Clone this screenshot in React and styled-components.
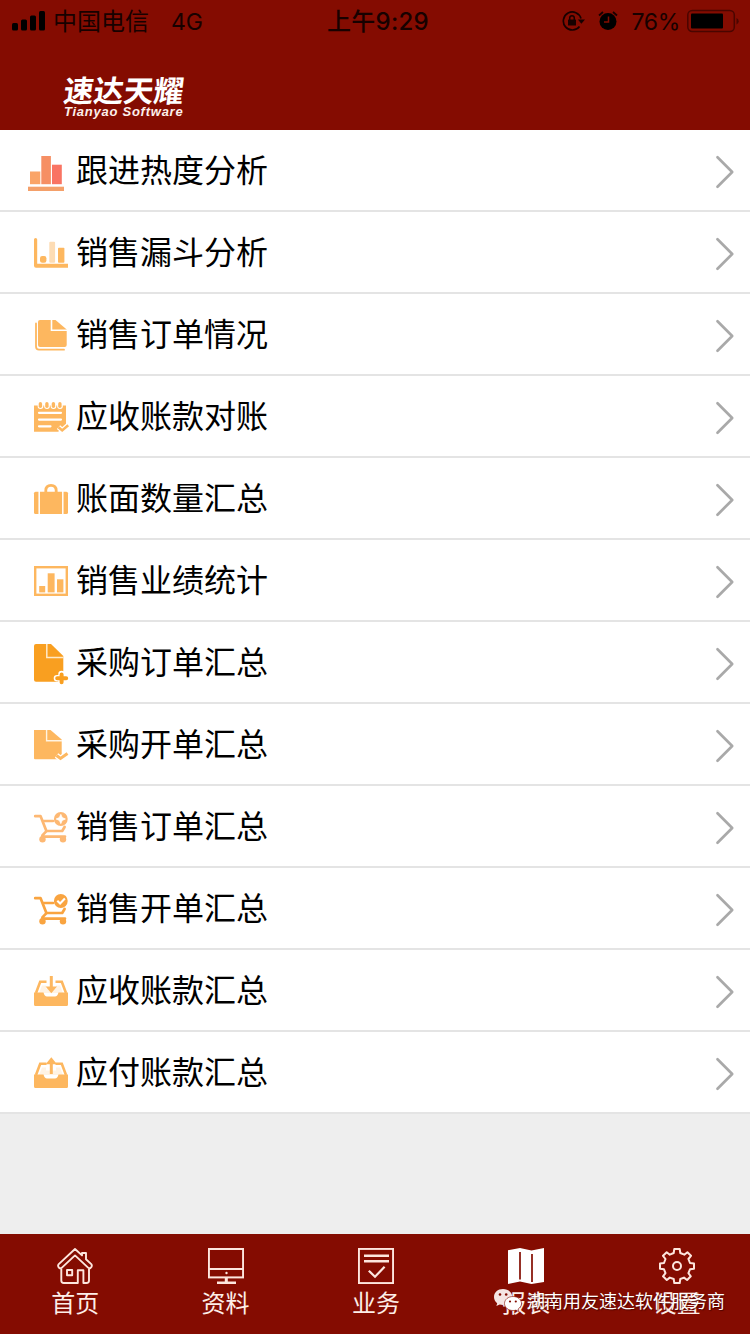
import React from "react";
import styled, { createGlobalStyle } from "styled-components";

const RED = "#840c01";
const ORANGE = "#fdb75f";
const DEEP = "#f99f20";
const INK = "#170100";

const GlobalStyle = createGlobalStyle`
  *, *::before, *::after { box-sizing: border-box; }
  body {
    margin: 0;
    background: #eeeeee;
    font-family: "Noto Sans CJK SC", sans-serif;
  }
`;

const Screen = styled.div`
  display: flex;
  flex-direction: column;
  width: 750px;
  height: 1334px;
  overflow: hidden;
  background: #eeeeee;
`;

const Header = styled.header`
  display: flex;
  flex-direction: column;
  height: 130px;
  background: ${RED};
`;

const StatusBar = styled.div`
  display: grid;
  grid-template-columns: 1fr auto 1fr;
  align-items: center;
  height: 40px;
  padding: 0 11px 0 12px;
  color: ${INK};
  font-family: Inter, "Noto Sans CJK SC", sans-serif;
  font-size: 24px;
  line-height: 40px;
`;

const StatusGroup = styled.div`
  display: flex;
  align-items: center;
  justify-content: ${(p) => (p.$end ? "flex-end" : "flex-start")};
`;

const StatusText = styled.span`
  padding-top: 2px;
  font-size: ${(p) => p.$size || 24}px;
  font-weight: ${(p) => p.$weight || 400};
  letter-spacing: ${(p) => p.$spacing || 0}px;
  margin-left: ${(p) => p.$gap || 0}px;
  line-height: 40px;
  white-space: nowrap;
`;

const StatusIcon = styled.svg`
  display: block;
  flex: none;
  margin-left: ${(p) => p.$gap || 0}px;
`;

const Brand = styled.div`
  display: flex;
  flex-direction: column;
  align-items: flex-start;
  padding: 33px 0 0 64px;
  color: #fff;
`;

const BrandName = styled.div`
  font-size: 30px;
  line-height: 32px;
  font-weight: 700;
  transform: skewX(-7deg);
`;

const BrandSub = styled.div`
  font-family: "Liberation Sans", sans-serif;
  font-size: 13px;
  line-height: 14px;
  font-weight: 700;
  font-style: italic;
  letter-spacing: 0.75px;
  white-space: nowrap;
  color: #fdf0ec;
`;

const List = styled.ul`
  flex: 1;
  margin: 0;
  padding: 0;
  list-style: none;
`;

const Row = styled.li`
  display: flex;
  align-items: center;
  height: 82px;
  padding: 0 14px 0 24px;
  background: #fff;
  border-bottom: 2px solid #e4e4e4;
`;

const RowIcon = styled.svg`
  display: block;
  flex: none;
  width: 48px;
  height: 48px;
`;

const RowLabel = styled.span`
  flex: 1;
  padding: 0 0 4px 4px;
  font-size: 32px;
  line-height: 48px;
  color: #000;
`;

const Chevron = styled.svg`
  display: block;
  flex: none;
  margin-top: 4px;
`;

const TabBar = styled.nav`
  position: relative;
  display: flex;
  height: 100px;
  background: ${RED};
`;

const Tab = styled.div`
  display: flex;
  flex: none;
  flex-direction: column;
  align-items: center;
  width: 150.4px;
  padding-top: 14px;
`;

const TabIcon = styled.svg`
  display: block;
  width: 36px;
  height: 36px;
`;

const TabLabel = styled.span`
  margin-top: 1px;
  font-size: 24px;
  line-height: 34px;
  color: #fdeee8;
`;

const Watermark = styled.div`
  position: absolute;
  left: 493px;
  top: 53px;
  display: flex;
  align-items: center;
  gap: 4px;
  color: #fff;
  font-size: 18px;
  line-height: 26px;
  white-space: nowrap;
  text-shadow: 1px 1px 1px rgba(60, 0, 0, 0.75);
`;

const HeatIcon = () => (
  <>
    <rect x="6" y="25.5" width="10.3" height="12.7" fill="#faa467" />
    <rect x="17.3" y="10" width="9.6" height="28.2" fill="#f68f64" />
    <rect x="28" y="18.7" width="9.8" height="19.5" fill="#f97463" />
    <rect x="4" y="40.7" width="36" height="4.3" fill="#f4a06a" />
  </>
);

const FunnelIcon = () => (
  <g fill={ORANGE}>
    <path d="M10 11.5q0-1.5 1.6-1.5t1.6 1.5v24.3H44v4H12q-2 0-2-2z" />
    <rect x="16" y="28" width="6.4" height="6.8" rx="2.2" />
    <rect x="25.3" y="13.7" width="5.8" height="21" rx="1" fill="#fddcb4" />
    <rect x="34" y="19.7" width="6.4" height="15" rx="0.8" />
  </g>
);

const FilesIcon = () => (
  <>
    <path d="M12 13.5V36.5Q12 39.7 15 39.7H40" fill="none" stroke={ORANGE} strokeWidth="1.8" strokeLinecap="round" />
    <path d="M16 10H31.5L42.7 19.5V35q0 2-2 2H16q-2 0-2-2V12q0-2 2-2z" fill={ORANGE} />
    <path d="M27.5 9.5V20.3H43" fill="none" stroke="#fff" strokeWidth="1.6" />
    <path d="M33 9h10v9.2z" fill="#fff" />
  </>
);

const NotesIcon = () => (
  <>
    <path d="M10 13.5H42V35l-8 4.8H10z" fill={ORANGE} />
    {[16.5, 23, 29.5, 36].map((x) => (
      <g key={x}>
        <circle cx={x} cy="14" r="2.9" fill="#fff" />
        <rect x={x - 1.8} y="10" width="3.4" height="6" rx="1.7" fill={ORANGE} />
      </g>
    ))}
    <path d="M15 20.8H37M15 27.6H37M15 34.3H26.5" stroke="#fff" strokeWidth="2.2" strokeLinecap="round" />
    <path d="M34.5 35.2l3.7 3.2 6-5.2" fill="none" stroke="#fff" strokeWidth="5" />
    <path d="M34.5 35.2l3.7 3.2 6-5.2" fill="none" stroke={ORANGE} strokeWidth="2.6" />
  </>
);

const CaseIcon = () => (
  <>
    <rect x="10" y="17.7" width="34" height="22.3" rx="1.6" fill={ORANGE} />
    <path d="M15.2 17V41M38.8 17V41" stroke="#fff" strokeWidth="1.5" />
    <path d="M21.8 18V16.5Q21.8 11.3 27 11.3T32.2 16.5V18" fill="none" stroke={ORANGE} strokeWidth="2.8" />
  </>
);

const StatsIcon = () => (
  <>
    <rect x="11.2" y="11.2" width="31.6" height="27.6" fill="none" stroke={ORANGE} strokeWidth="2.4" />
    <g fill={ORANGE}>
      <rect x="15.2" y="30" width="6" height="6.4" />
      <rect x="23.7" y="17.3" width="6.9" height="19.1" />
      <rect x="33" y="23.3" width="6.4" height="13.1" />
    </g>
  </>
);

const PurchaseOrderIcon = () => (
  <>
    <path d="M12 6H27L39.3 18V43.7H12q-2 0-2-2V8q0-2 2-2z" fill={DEEP} />
    <path d="M22.8 6V19.6H39.5" fill="none" stroke="#ffe9c8" strokeWidth="1.5" />
    <path d="M37.6 36V45M33 40.2H44" stroke="#fff" strokeWidth="6.6" strokeLinecap="round" />
    <path d="M37.6 36.4V44.2M33.2 40.2H42.2" stroke={DEEP} strokeWidth="4" strokeLinecap="round" />
  </>
);

const PurchaseBillIcon = () => (
  <>
    <path d="M10 10H26.5L37.7 19.5V39.3H11q-1 0-1-1z" fill={ORANGE} />
    <path d="M22.6 10V20.8H38" fill="none" stroke="#fff4e2" strokeWidth="1.4" />
    <path d="M32.5 35.5l4 3 7-5" fill="none" stroke="#fff" strokeWidth="5.6" />
    <path d="M32.5 35.5l4 3 7-5" fill="none" stroke={ORANGE} strokeWidth="3" />
  </>
);

const Cart = ({ color, done }) => (
  <>
    <g fill="none" stroke={color} strokeWidth="2.7" strokeLinecap="round" strokeLinejoin="round">
      <path d="M11.2 14.2H16.6L22.4 29H38.2L40.6 25" />
      <path d="M19.5 19H29M22.2 29.4L18.4 33.4Q18 34.6 19.5 34.6H41" />
    </g>
    <circle cx="18.5" cy="37.2" r="3.2" fill={color} />
    <circle cx="39" cy="37.2" r="3.2" fill={color} />
    <circle cx="36.8" cy="17" r="6.9" fill={color} />
    {done ? (
      <path d="M33.3 16.8l2.8 2.8 4.8-5" fill="none" stroke="#fff" strokeWidth="2.1" />
    ) : (
      <path d="M36.8 12.4l1.4 3.2 3.2 1.4-3.2 1.4-1.4 3.2-1.4-3.2-3.2-1.4 3.2-1.4z" fill="#fff" stroke="#fff" strokeWidth="0.8" />
    )}
  </>
);

const SalesOrderIcon = () => <Cart color="#fdb873" />;
const SalesBillIcon = () => <Cart color="#f9a440" done />;

const Tray = ({ up }) => (
  <>
    <path d="M22.500 15.800H16.200L12 27M31.500 15.800H37.800L42 27" fill="none" stroke={ORANGE} strokeWidth="2.600" />
    <path d="M18 19.500H22V22.500H32V19.500H36L39 27H15z" fill="#fff3e4" />
    <path d="M10 26.500H19.500Q20.500 30.500 23 30.500H31Q33.500 30.500 34.500 26.500H44V38.500Q44 40 42.500 40H11.500Q10 40 10 38.500z" fill={ORANGE} />
    <path d={up ? "M27.300 26V15" : "M27.300 10V21.500"} fill="none" stroke={ORANGE} strokeWidth="3" />
    <path d={up ? "M27.300 9.300L33 16.300H21.600z" : "M27.300 27.300L33 20.500H21.600z"} fill={ORANGE} />
  </>
);

const ReceivableIcon = () => <Tray />;
const PayableIcon = () => <Tray up />;

const rows = [
  ["跟进热度分析", HeatIcon],
  ["销售漏斗分析", FunnelIcon],
  ["销售订单情况", FilesIcon],
  ["应收账款对账", NotesIcon],
  ["账面数量汇总", CaseIcon],
  ["销售业绩统计", StatsIcon],
  ["采购订单汇总", PurchaseOrderIcon],
  ["采购开单汇总", PurchaseBillIcon],
  ["销售订单汇总", SalesOrderIcon],
  ["销售开单汇总", SalesBillIcon],
  ["应收账款汇总", ReceivableIcon],
  ["应付账款汇总", PayableIcon],
];

const HomeIcon = () => (
  <g fill="none" stroke="#fde6de" strokeWidth="1.9" strokeLinejoin="round">
    <path d="M18 1L25 7.4V5H29V11.2L34.5 16.4Q35.5 18.5 33.5 20Q32 20.6 30.8 19.4L18 7.4L5.2 19.4Q4 20.6 2.3 20Q0.4 18.4 1.5 16.4z" />
    <path d="M4.3 20.5V32.5Q4.3 35 6.8 35H20.8V22.2H26.4V35H29.5Q32 35 32 32.5V20.5" />
    <rect x="10" y="22" width="5.2" height="5.2" />
  </g>
);

const MonitorIcon = () => (
  <>
    <rect x="0.9" y="1" width="34.2" height="28.4" fill="none" stroke="#fde6de" strokeWidth="2" />
    <path d="M1 21H35" stroke="#fde6de" strokeWidth="2" />
    <circle cx="18.5" cy="25" r="1.2" fill="#fde6de" />
    <path d="M16.800 29.500h3v4H28V36H9V33.500h7.800z" fill="#fde6de" />
  </>
);

const TaskIcon = () => (
  <g fill="none" stroke="#fde6de">
    <rect x="0.9" y="0.9" width="34.2" height="34.2" strokeWidth="2" />
    <path d="M6 7.8H31M6 13.3H31" strokeWidth="2.4" />
    <path d="M10.8 22.7L17 28.7L26.6 18.8" strokeWidth="2.2" />
  </g>
);

const MapIcon = () => (
  <>
    <path d="M0 2.2L12 0L23.5 2.5L36 0V34L23.5 36L12 33.5L0 36z" fill="#fff" />
    <path d="M12 4V31.5M24 6V34" stroke={RED} strokeWidth="1.7" />
  </>
);

const GearIcon = () => (
  <g fill="none" stroke="#fde6de" strokeWidth="2" strokeLinejoin="round">
    <path d="M15.3 1H20.7L21.3 5L25.3 6.7L28.4 4.2L32 7.8L29.4 11L31 15L35 15.5V20.7L31 21.3L29.4 25.1L31.8 28.3L28.1 32L25 29.6L21.3 31L20.7 35H15.3L14.7 31L10.8 29.6L7.8 32L4 28.3L6.5 25.1L5 21.3L1 20.7V15.5L5 15L6.5 11L4 7.8L7.7 4.2L10.8 6.7L14.7 5z" />
    <circle cx="18" cy="18" r="4" />
  </g>
);

const tabs = [
  ["首页", HomeIcon],
  ["资料", MonitorIcon],
  ["业务", TaskIcon],
  ["报表", MapIcon],
  ["设置", GearIcon],
];

const WeChatMark = () => (
  <svg width="30" height="26" viewBox="0 0 30 26">
    <path d="M10 2C4.7 2 1 5.500 1 10c0 2.500 1.200 4.700 3.200 6.200L3.400 19l3.300-1.600c1 .3 2.100.5 3.300.5 5.300 0 9.300-3.500 9.300-8S15.300 2 10 2z" fill="#f5e5e3" />
    <circle cx="7" cy="7.500" r="1.300" fill={RED} />
    <circle cx="13.200" cy="7.500" r="1.300" fill={RED} />
    <path d="M20 9.500c-4.800 0-8.500 3.100-8.500 7s3.700 7 8.500 7c1 0 2-.1 2.900-.4l2.900 1.500-.8-2.500c2-1.300 3.500-3.200 3.500-5.600 0-3.900-3.700-7-8.500-7z" fill="#fff" stroke={RED} strokeWidth="0.600" />
    <circle cx="17" cy="14.500" r="1.100" fill={RED} />
    <circle cx="22.800" cy="14.500" r="1.100" fill={RED} />
  </svg>
);

export default function App() {
  return (
    <>
      <GlobalStyle />
      <Screen>
        <Header>
          <StatusBar>
            <StatusGroup>
              <StatusIcon width="34" height="22" viewBox="0 0 34 22" fill="#000">
                <rect x="0" y="13" width="6" height="7.500" rx="1.500" />
                <rect x="9" y="9.500" width="6" height="11" rx="1.500" />
                <rect x="18" y="5.500" width="6" height="15" rx="1.500" />
                <rect x="27" y="1" width="6" height="19.500" rx="1.500" />
              </StatusIcon>
              <StatusText $gap={7}>中国电信</StatusText>
              <StatusText $gap={22} $size={23}>4G</StatusText>
            </StatusGroup>
            <StatusText $gap={5} $weight={500} $spacing={0.3}>上午9:29</StatusText>
            <StatusGroup $end>
              <StatusIcon width="23" height="22" viewBox="0 0 23 22">
                <path d="M17.500 16.500A9 9 0 1 1 19 8.500" fill="none" stroke={INK} strokeWidth="1.700" />
                <path d="M15.800 9.500H23L19.400 13.800z" fill={INK} />
                <rect x="6" y="9.500" width="8" height="6" rx="0.600" fill={INK} />
                <path d="M7.700 10V8a2.300 2.300 0 0 1 4.600 0V10" fill="none" stroke={INK} strokeWidth="1.500" />
              </StatusIcon>
              <StatusIcon $gap={13} width="20" height="22" viewBox="0 0 20 22">
                <circle cx="10" cy="11.500" r="8.500" fill="#000" />
                <path d="M1 5.500L5 2M19 5.500L15 2" stroke={INK} strokeWidth="1.800" />
                <path d="M10.500 6.500V12H6" fill="none" stroke={RED} strokeWidth="1.500" />
              </StatusIcon>
              <StatusText $gap={13} $size={23} $spacing={-0.3}>76%</StatusText>
              <StatusIcon $gap={7} width="52" height="24" viewBox="0 0 52 24">
                <rect x="0.800" y="1.500" width="46.500" height="21" rx="4.500" fill="none" stroke="#4a0500" strokeWidth="1.500" />
                <rect x="4" y="4.500" width="32" height="15" rx="1" fill="#000" />
                <path d="M49.500 9v6.500q2.200-.8 2.200-3.200T49.500 9z" fill="#4a0500" />
              </StatusIcon>
            </StatusGroup>
          </StatusBar>
          <Brand>
            <BrandName>速达天耀</BrandName>
            <BrandSub>Tianyao Software</BrandSub>
          </Brand>
        </Header>
        <List>
          {rows.map(([label, Icon]) => (
            <Row key={label}>
              <RowIcon viewBox="0 0 48 48"><Icon /></RowIcon>
              <RowLabel>{label}</RowLabel>
              <Chevron width="22" height="36" viewBox="0 0 22 36">
                <path d="M3.500 3.300L18.200 18L3.500 32.700" fill="none" stroke="#a9a9a9" strokeWidth="2.700" strokeLinecap="round" strokeLinejoin="round" />
              </Chevron>
            </Row>
          ))}
        </List>
        <TabBar>
          {tabs.map(([label, Icon]) => (
            <Tab key={label}>
              <TabIcon viewBox="0 0 36 36"><Icon /></TabIcon>
              <TabLabel>{label}</TabLabel>
            </Tab>
          ))}
          <Watermark>
            <WeChatMark />
            <span>湖南用友速达软件服务商</span>
          </Watermark>
        </TabBar>
      </Screen>
    </>
  );
}
